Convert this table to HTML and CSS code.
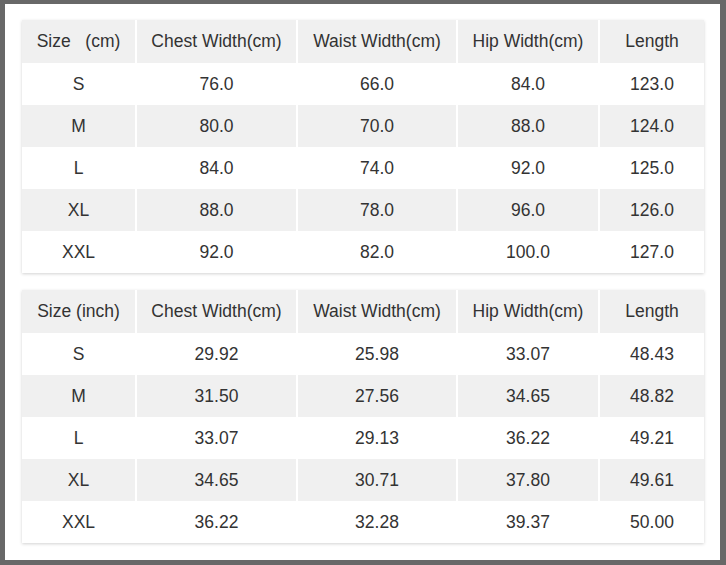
FILE: index.html
```html
<!DOCTYPE html>
<html>
<head>
<meta charset="utf-8">
<link rel="stylesheet" href="styles.css">
</head>
<body>
<div class="panel">
  <div class="card">
    <table class="size-table">
      <colgroup><col class="c1"><col class="c2"><col class="c3"><col class="c4"><col class="c5"></colgroup>
      <tr class="head"><td>Size&nbsp;&nbsp;&nbsp;(cm)</td><td>Chest Width(cm)</td><td>Waist Width(cm)</td><td>Hip Width(cm)</td><td>Length</td></tr>
      <tr><td>S</td><td>76.0</td><td>66.0</td><td>84.0</td><td>123.0</td></tr>
      <tr class="alt"><td>M</td><td>80.0</td><td>70.0</td><td>88.0</td><td>124.0</td></tr>
      <tr><td>L</td><td>84.0</td><td>74.0</td><td>92.0</td><td>125.0</td></tr>
      <tr class="alt"><td>XL</td><td>88.0</td><td>78.0</td><td>96.0</td><td>126.0</td></tr>
      <tr><td>XXL</td><td>92.0</td><td>82.0</td><td>100.0</td><td>127.0</td></tr>
    </table>
  </div>
  <div class="card">
    <table class="size-table">
      <colgroup><col class="c1"><col class="c2"><col class="c3"><col class="c4"><col class="c5"></colgroup>
      <tr class="head"><td>Size (inch)</td><td>Chest Width(cm)</td><td>Waist Width(cm)</td><td>Hip Width(cm)</td><td>Length</td></tr>
      <tr><td>S</td><td>29.92</td><td>25.98</td><td>33.07</td><td>48.43</td></tr>
      <tr class="alt"><td>M</td><td>31.50</td><td>27.56</td><td>34.65</td><td>48.82</td></tr>
      <tr><td>L</td><td>33.07</td><td>29.13</td><td>36.22</td><td>49.21</td></tr>
      <tr class="alt"><td>XL</td><td>34.65</td><td>30.71</td><td>37.80</td><td>49.61</td></tr>
      <tr><td>XXL</td><td>36.22</td><td>32.28</td><td>39.37</td><td>50.00</td></tr>
    </table>
  </div>
</div>
</body>
</html>
```

FILE: styles.css
```css
html, body {
  margin: 0;
  padding: 0;
}
body {
  background: #686868;
  width: 726px;
  height: 565px;
  overflow: hidden;
  padding: 4px 6px 5px 5px;
  box-sizing: border-box;
  font-family: "Liberation Sans", Arial, sans-serif;
}
.panel {
  background: #fff;
  height: 556px;
  padding: 16px 16px 0 17px;
  box-sizing: border-box;
  display: flex;
  flex-direction: column;
  gap: 17px;
}
.card {
  width: 682px;
  box-shadow: 0 1px 3px rgba(0, 0, 0, 0.18);
  background: #fff;
}
.size-table {
  width: 682px;
  table-layout: fixed;
  border-collapse: collapse;
  font-size: 17.5px;
  color: #333;
}
.c1 { width: 114px; }
.c2 { width: 161px; }
.c3 { width: 160px; }
.c4 { width: 142px; }
.c5 { width: 105px; }
.size-table td {
  height: 42px;
  padding: 0;
  text-align: center;
  vertical-align: middle;
  white-space: nowrap;
  box-sizing: border-box;
}
.size-table .head td {
  height: 43px;
}
.size-table td + td {
  border-left: 2px solid #fff;
}
.head td, .alt td {
  background: #f0f0f0;
}
```
